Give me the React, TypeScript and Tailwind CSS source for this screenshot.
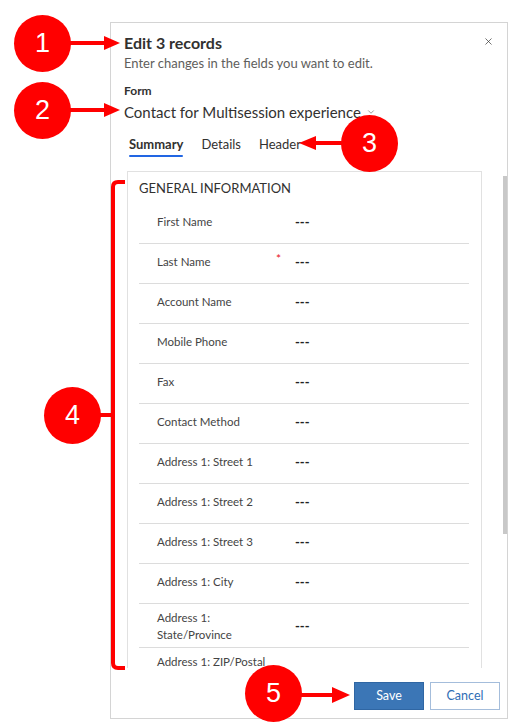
import { X, ChevronDown } from 'lucide-react';

type Field = { label: string; required?: boolean; tall?: boolean };

const fields: Field[] = [
  { label: 'First Name' },
  { label: 'Last Name', required: true },
  { label: 'Account Name' },
  { label: 'Mobile Phone' },
  { label: 'Fax' },
  { label: 'Contact Method' },
  { label: 'Address 1: Street 1' },
  { label: 'Address 1: Street 2' },
  { label: 'Address 1: Street 3' },
  { label: 'Address 1: City' },
  { label: 'Address 1: State/Province', tall: true },
  { label: 'Address 1: ZIP/Postal Code', tall: true },
];

const callouts = [
  { n: '1', cls: 'left-[14px] top-[15px]' },
  { n: '2', cls: 'left-[14px] top-[82px]' },
  { n: '3', cls: 'left-[341px] top-[115px]' },
  { n: '4', cls: 'left-[44px] top-[387px]' },
  { n: '5', cls: 'left-[245px] top-[665px]' },
];

export default function App() {
  return (
    <div className="relative w-[527px] h-[726px] bg-white overflow-hidden font-['Lato',sans-serif] text-[#323130]">
      {/* dialog */}
      <div className="ml-[110px] mt-[22px] w-[398px] h-[697px] border border-[#d4d4d4] flex flex-col">
        <div className="relative pl-[13px] pt-[10px]">
          <button className="absolute right-[13px] top-[13px] text-[#323130]">
            <X className="w-[11px] h-[11px]" strokeWidth={1.5} />
          </button>
          <h1 className="text-[16px] leading-[20px] font-bold">Edit 3 records</h1>
          <p className="text-[13px] leading-[20px] text-[#605e5c]">Enter changes in the fields you want to edit.</p>
          <div className="mt-[10px] text-[12px] leading-[16px] font-bold">Form</div>
          <div className="mt-[2px] flex items-center gap-[5px] text-[15px] leading-[22px]">
            Contact for Multisession experience
            <ChevronDown className="w-[10px] h-[10px] text-[#605e5c]" strokeWidth={1.5} />
          </div>
          <div className="mt-[11px] ml-[5px] flex gap-[18px] text-[13px] leading-[20px]">
            <div className="flex flex-col">
              <span className="font-bold">Summary</span>
              <span className="mt-[1px] h-[2px] bg-[#2266e3] rounded-full" />
            </div>
            <span>Details</span>
            <span>Header</span>
          </div>
        </div>

        <div className="mt-[14px] flex-1 min-h-0 flex">
          <div className="ml-[16px] w-[355px] border border-b-0 border-[#e1e1e1] overflow-hidden">
            <div className="pl-[11px] pt-[6px] text-[13px] leading-[20px] text-[#323130]">GENERAL INFORMATION</div>
            <div className="mt-[6px] ml-[11px] mr-[12px]">
              {fields.map((f) => (
                <div
                  key={f.label}
                  className={`flex border-b border-[#dcdcdc] ${f.tall ? 'h-[44px] items-center' : 'h-[40px] pt-[9px]'}`}
                >
                  <div className="ml-[18px] w-[138px] flex justify-between pr-[14px] text-[11.5px] leading-[17px] text-[#444444]">
                    <span className="max-w-[110px]">{f.label}</span>
                    {f.required && <span className="text-[#e81123] text-[12px] leading-[12px]">*</span>}
                  </div>
                  <div className="text-[13px] leading-[18px] font-bold text-[#222222]">---</div>
                </div>
              ))}
            </div>
          </div>
          <div className="flex-1" />
          <div className="mt-[5px] w-[4px] h-[358px] bg-[#c8c8c8]" />
        </div>

        <div className="pt-[14px] pb-[8px] pr-[7px] flex justify-end gap-[6px] text-[12.5px]">
          <button className="w-[70px] h-[28px] bg-[#3b76b6] border border-[#2f66a3] text-white">Save</button>
          <button className="w-[70px] h-[28px] bg-white border border-[#a4bddb] text-[#2f6db5]">Cancel</button>
        </div>
      </div>

      {/* annotations */}
      <svg className="absolute inset-0 pointer-events-none" width="527" height="726" viewBox="0 0 527 726">
        <g stroke="#ff0000" strokeWidth="4" fill="none">
          <line x1="66" y1="43" x2="106" y2="43" />
          <line x1="66" y1="110" x2="106" y2="110" />
          <line x1="344" y1="143" x2="312" y2="143" />
          <line x1="298" y1="695" x2="334" y2="695" />
          <line x1="98" y1="415" x2="113" y2="415" />
          <path d="M125 182 H118 Q113 182 113 187 V663 Q113 668 118 668 H125" />
        </g>
        <g fill="#ff0000">
          <polygon points="104,36 120,43 104,50" />
          <polygon points="104,103 120,110 104,117" />
          <polygon points="316,136 299,143 316,150" />
          <polygon points="332,687 350,695 332,703" />
        </g>
      </svg>
      {callouts.map((c) => (
        <div
          key={c.n}
          className={`absolute ${c.cls} w-[57px] h-[57px] rounded-full bg-[#ff0000] flex items-center justify-center text-white text-[27px] font-['Liberation_Sans',sans-serif]`}
        >
          {c.n}
        </div>
      ))}
    </div>
  );
}
